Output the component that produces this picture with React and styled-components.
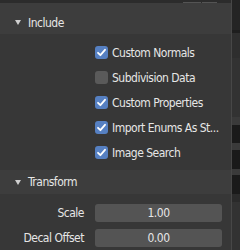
import React from "react";
import styled, { createGlobalStyle } from "styled-components";

const Global = createGlobalStyle`
  html, body {
    margin: 0;
    padding: 0;
    background: #373737;
    overflow: hidden;
  }
  body {
    font-family: "DejaVu Sans Condensed", "DejaVu Sans", sans-serif;
    font-stretch: condensed;
    letter-spacing: -0.5px;
  }
`;

const Frame = styled.div`
  display: flex;
  width: 240px;
  height: 250px;
  overflow: hidden;
`;

const Main = styled.div`
  width: 231px;
  display: flex;
  flex-direction: column;
  background: #373737;
`;

const Divider = styled.div`
  width: 1px;
  background: #474747;
`;

const Strip = styled.div`
  flex: 1;
  display: flex;
  flex-direction: column;
`;

const StripBlock = styled.div`
  height: ${(p) => p.h}px;
  flex: ${(p) => (p.grow ? 1 : "none")};
  background: ${(p) => p.c};
`;

const TopBar = styled.div`
  height: 3px;
  display: flex;
  background: #2c2c2c;
  padding-left: 183px;
  gap: 1px;

  span {
    width: 18px;
    height: 1px;
    margin-top: 2px;
    background: #545454;
  }
`;

const HeaderPad = styled.div`
  height: 8px;
  background: #3d3d3d;
`;

const Header = styled.div`
  height: ${(p) => p.h}px;
  display: flex;
  align-items: center;
  gap: 7px;
  padding-left: 15px;
  background: #3d3d3d;
  color: #e6e6e6;
  font-size: 12px;
`;

const Triangle = styled.span`
  width: 0;
  height: 0;
  border-left: 3px solid transparent;
  border-right: 3px solid transparent;
  border-top: 5px solid #cfcfcf;
`;

const Body = styled.div`
  padding: 6px 0 ${(p) => p.pb}px;
  display: flex;
  flex-direction: column;
`;

const CheckRow = styled.div`
  height: 25px;
  display: flex;
  align-items: center;
  gap: 4px;
  padding-left: 95px;
  color: #e6e6e6;
  font-size: 12px;
  white-space: nowrap;
`;

const Box = styled.span`
  width: 13px;
  height: 13px;
  border-radius: 3px;
  background: ${(p) => (p.checked ? "#5680c2" : "#5a5a5a")};
  display: flex;
  align-items: center;
  justify-content: center;
`;

const FieldRow = styled.div`
  height: 25px;
  display: grid;
  grid-template-columns: 95px 127px;
  align-items: center;
  font-size: 12px;
`;

const Label = styled.span`
  text-align: right;
  padding-right: 11px;
  color: #e6e6e6;
`;

const Field = styled.div`
  height: 18px;
  border-radius: 3px;
  background: #545454;
  color: #e6e6e6;
  display: flex;
  align-items: center;
  justify-content: center;
`;

const Check = () => (
  <svg width="11" height="11" viewBox="0 0 11 11">
    <path
      d="M2 5.8 L4.4 8.2 L9 2.8"
      fill="none"
      stroke="#ffffff"
      strokeWidth="1.8"
      strokeLinecap="round"
      strokeLinejoin="round"
    />
  </svg>
);

const includes = [
  ["Custom Normals", true],
  ["Subdivision Data", false],
  ["Custom Properties", true],
  ["Import Enums As St...", true],
  ["Image Search", true],
];

const strip = [
  [30, "#242424"],
  [3, "#1e1e1e"],
  [25, "#2e2e2e"],
  [59, "#323232"],
  [8, "#3a3a3a"],
  [18, "#1a1a1a"],
  [7, "#3a3a3a"],
  [19, "#1a1a1a"],
  [6, "#3a3a3a"],
  [19, "#1a1a1a"],
  [8, "#2a2a2a"],
];

export default function App() {
  return (
    <>
      <Global />
      <Frame>
        <Main>
          <TopBar>
            <span />
            <span style={{ width: 15 }} />
          </TopBar>
          <HeaderPad />
          <Header h={23}>
            <Triangle />
            Include
          </Header>
          <Body pb={5}>
            {includes.map(([text, on]) => (
              <CheckRow key={text}>
                <Box checked={on}>{on && <Check />}</Box>
                {text}
              </CheckRow>
            ))}
          </Body>
          <Header h={24}>
            <Triangle />
            Transform
          </Header>
          <Body pb={0}>
            <FieldRow>
              <Label>Scale</Label>
              <Field>1.00</Field>
            </FieldRow>
            <FieldRow>
              <Label>Decal Offset</Label>
              <Field>0.00</Field>
            </FieldRow>
          </Body>
        </Main>
        <Divider />
        <Strip>
          {strip.map(([h, c], i) => (
            <StripBlock key={i} h={h} c={c} />
          ))}
          <StripBlock grow c="#323232" />
        </Strip>
      </Frame>
    </>
  );
}
